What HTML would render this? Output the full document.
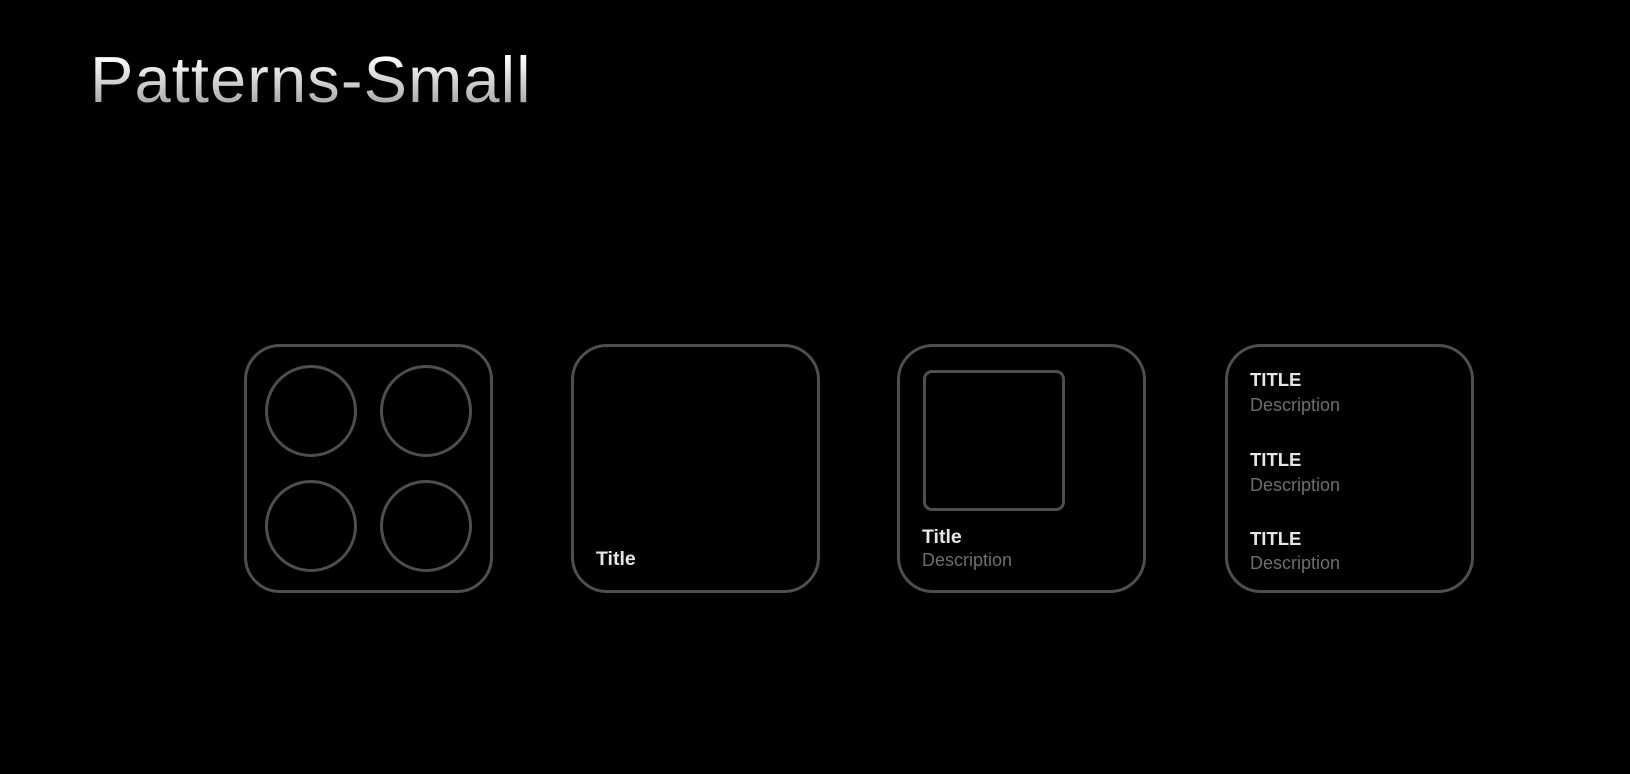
<!DOCTYPE html>
<html><head><meta charset="utf-8"><style>
html,body{margin:0;padding:0;background:#000;width:1630px;height:774px;overflow:hidden;font-family:"Liberation Sans",sans-serif}
h1{position:absolute;left:90px;top:47px;margin:0;font-weight:400;font-size:65px;letter-spacing:1.1px;line-height:65px;
background:linear-gradient(#fff 15%,#9a9a9a 100%);-webkit-background-clip:text;background-clip:text;color:transparent}
.card{position:absolute;top:344px;width:243px;height:243px;border:3px solid #4e4e4e;border-radius:36px}
.c{position:absolute;width:86px;height:86px;border:3px solid #4e4e4e;border-radius:50%}
.t{position:absolute;color:#e6e6e6;font-weight:bold;font-size:18.5px;line-height:20px}
.d{position:absolute;color:#6e6e6e;font-size:18px;line-height:20px}
</style></head><body>
<h1>Patterns-Small</h1>
<div class="card" style="left:244px">
<div class="c" style="left:18px;top:18px"></div>
<div class="c" style="left:133px;top:18px"></div>
<div class="c" style="left:18px;top:133px"></div>
<div class="c" style="left:133px;top:133px"></div>
</div>
<div class="card" style="left:571px">
<div class="t" style="left:22px;top:202px;font-size:19.5px">Title</div>
</div>
<div class="card" style="left:897px">
<div style="position:absolute;left:23px;top:23px;width:136px;height:135px;border:3px solid #4e4e4e;border-radius:9px"></div>
<div class="t" style="left:22px;top:180px;font-size:19.5px">Title</div>
<div class="d" style="left:22px;top:203px">Description</div>
</div>
<div class="card" style="left:1225px">
<div class="t" style="left:22px;top:23px">TITLE</div>
<div class="d" style="left:22px;top:48px">Description</div>
<div class="t" style="left:22px;top:103px">TITLE</div>
<div class="d" style="left:22px;top:128px">Description</div>
<div class="t" style="left:22px;top:182px">TITLE</div>
<div class="d" style="left:22px;top:206px">Description</div>
</div>
</body></html>
